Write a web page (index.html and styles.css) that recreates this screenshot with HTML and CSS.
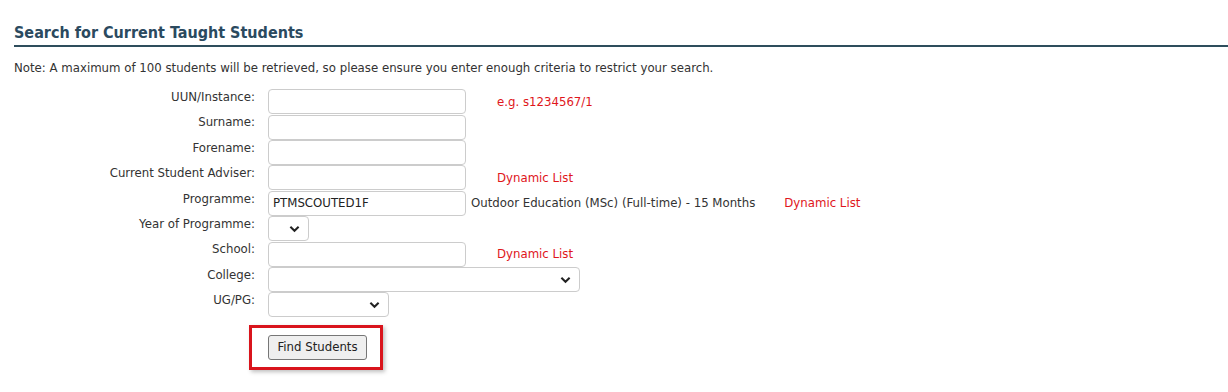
FILE: index.html
```html
<!doctype html>
<html>
  <head>
    <title>Search for Current Taught Students</title>
    <link rel="stylesheet" href="styles.css">
  </head>
  <body>
    <h2 class="page-title">Search for Current Taught Students</h2>
    <p class="note">Note: A maximum of 100 students will be retrieved, so please ensure you enter enough criteria to restrict your search.</p>

    <form class="search" action="">
      <label class="lbl" for="uun">UUN/Instance:</label>
      <div class="field"><input id="uun" class="txt" type="text"><span class="hint">e.g. s1234567/1</span></div>

      <label class="lbl" for="surname">Surname:</label>
      <div class="field"><input id="surname" class="txt" type="text"></div>

      <label class="lbl" for="forename">Forename:</label>
      <div class="field"><input id="forename" class="txt" type="text"></div>

      <label class="lbl" for="adviser">Current Student Adviser:</label>
      <div class="field"><input id="adviser" class="txt" type="text"><span class="hint">Dynamic List</span></div>

      <label class="lbl" for="prog">Programme:</label>
      <div class="field"><input id="prog" class="txt" type="text" value="PTMSCOUTED1F"><span class="desc">Outdoor Education (MSc) (Full-time) - 15 Months</span><span class="hint hint-near">Dynamic List</span></div>

      <label class="lbl" for="year">Year of Programme:</label>
      <div class="field"><div class="sel sel-year"><select id="year"><option></option></select><svg class="chev" viewBox="0 0 12 8"><path d="M1.5 1.5 6 6l4.5-4.5" /></svg></div></div>

      <label class="lbl" for="school">School:</label>
      <div class="field"><input id="school" class="txt" type="text"><span class="hint">Dynamic List</span></div>

      <label class="lbl" for="college">College:</label>
      <div class="field"><div class="sel sel-college"><select id="college"><option></option></select><svg class="chev" viewBox="0 0 12 8"><path d="M1.5 1.5 6 6l4.5-4.5" /></svg></div></div>

      <label class="lbl" for="ugpg">UG/PG:</label>
      <div class="field"><div class="sel sel-ugpg"><select id="ugpg"><option></option></select><svg class="chev" viewBox="0 0 12 8"><path d="M1.5 1.5 6 6l4.5-4.5" /></svg></div></div>

      <div class="actions">
        <div class="highlight"><button class="btn" type="submit">Find Students</button></div>
      </div>
    </form>
  </body>
</html>
```

FILE: styles.css
```css
body { margin: 0; padding: 0 0 0 14px; background: #fff; color: #333; font-family: "DejaVu Sans", Verdana, sans-serif; font-size: 11.75px; }

.page-title { margin: 22px 0 0; padding-bottom: 1px; font-family: "DejaVu Sans Condensed", "DejaVu Sans", sans-serif; font-size: 16px; font-weight: bold; color: #2b4a5f; border-bottom: 2px solid #2e4d5c; line-height: 22px; }

.note { margin: 13px 0 13px; line-height: 16px; color: #333; }

.search { display: grid; grid-template-columns: 241px auto; column-gap: 13px; grid-auto-rows: 25.4px; align-items: center; }
.lbl { text-align: right; color: #333; align-self: start; padding-top: 1px; }
.field { display: flex; align-items: center; height: 100%; }

.txt { box-sizing: border-box; width: 198px; height: 25px; margin: 0; padding: 0 4px; border: 1px solid #ccc; border-radius: 4px; font-family: inherit; font-size: 11.75px; color: #222; outline: none; }

.hint { margin-left: 31px; color: #e0161b; }
.desc { margin-left: 5px; color: #333; }
.hint-near { margin-left: 29px; }

.sel { position: relative; height: 25px; }
.sel select { box-sizing: border-box; width: 100%; height: 25px; margin: 0; border: 1px solid #ccc; border-radius: 4px; background: #fff; -webkit-appearance: none; appearance: none; font-family: inherit; font-size: 11.75px; outline: none; }
.sel-year { width: 41px; }
.sel-college { width: 312px; }
.sel-ugpg { width: 121px; }
.chev { position: absolute; right: 9px; top: 9px; width: 11px; height: 8px; fill: none; stroke: #222; stroke-width: 2.2; pointer-events: none; }

.actions { grid-column: 2; grid-row: span 3; align-self: start; margin-left: -19px; padding-top: 7px; }
.highlight { display: inline-block; padding: 7px 13px 7px 16px; border: 3px solid #d9141c; box-shadow: 2px 2px 4px rgba(0, 0, 0, 0.25); }
.btn { box-sizing: border-box; width: 99px; height: 25px; margin: 0; padding: 0; background: #efefef; border: 1px solid #767676; border-radius: 3px; font-family: inherit; font-size: 11.75px; color: #222; display: block; }
```
